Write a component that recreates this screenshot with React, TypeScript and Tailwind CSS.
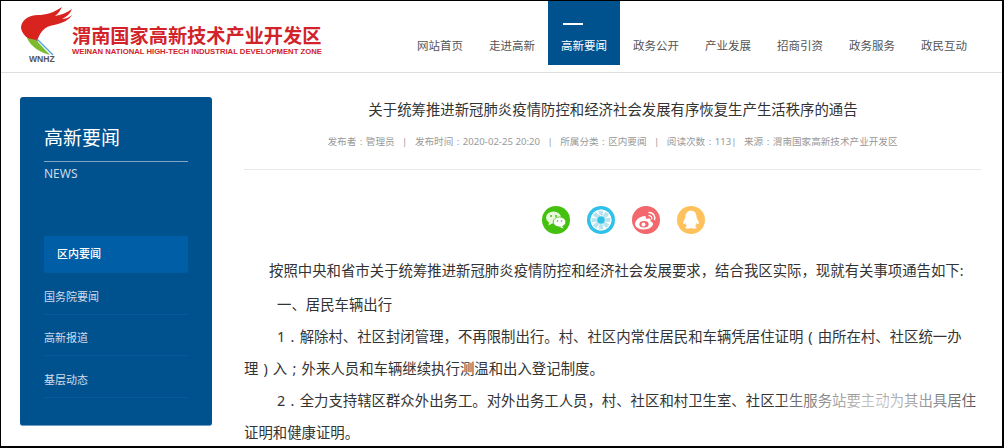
import React from "react";

const cjk = "font-['Noto_Sans','Noto_Sans_CJK_SC',sans-serif]";

const navItems = ["网站首页", "走进高新", "高新要闻", "政务公开", "产业发展", "招商引资", "政务服务", "政民互动"];
const sideItems = ["国务院要闻", "高新报道", "基层动态"];

// punctuation sits centred in a full-width cell in the reference
function Fw({ children }: { children: React.ReactNode }) {
  return <span className="inline-block w-[1em] text-center">{children}</span>;
}

function Logo() {
  return (
    <div className="flex items-start">
      <svg width="57" height="60" viewBox="0 0 57 60" className="mt-[4px] ml-[14px] shrink-0">
        <path d="M22 39C12 34 6 28 6 22C7 14 15 10 23 10C31 10 38 8 47 2C45 6 43 9 40 11C46 10 51 8 57 4C55 9 51 12 47 14C50 14 53 13 57 10C54 15 48 18 39 20C30 21 23 28 22 39Z" fill="#d8231f" />
        <path d="M12 33L21 35L35 50C26 48 16 42 12 33Z" fill="#7dbb2e" />
        <path d="M22 34L38 50" fill="none" stroke="#4aa5dc" strokeWidth="1.2" />
        <text x="14" y="57" fontSize="8.6" fontWeight="700" fill="#555" fontFamily="'Liberation Sans',sans-serif">WNHZ</text>
      </svg>
      <div className="mt-[25px] w-[252px] text-[#d2232a]">
        <div className="text-[19.2px] leading-[20px] font-bold whitespace-nowrap">渭南国家高新技术产业开发区</div>
        <div className="mt-[1px] font-['Liberation_Sans',sans-serif] text-[7.7px] leading-[9px] font-bold whitespace-nowrap">
          WEINAN NATIONAL HIGH-TECH INDUSTRIAL DEVELOPMENT ZONE
        </div>
      </div>
    </div>
  );
}

function Nav() {
  return (
    <div className="flex">
      {navItems.map((item) =>
        item === "高新要闻" ? (
          <div key={item} className="flex h-[64px] w-[72px] flex-col items-center bg-[#00528f] text-white">
            <div className="mt-[22px] mr-[22px] h-[2px] w-[20px] bg-white" />
            <div className="mt-[13px] text-[11.5px] leading-[16px]">{item}</div>
          </div>
        ) : (
          <div key={item} className="flex h-[64px] w-[72px] justify-center pt-[37px] text-[11.5px] leading-[16px] text-[#555]">
            {item}
          </div>
        ),
      )}
    </div>
  );
}

function Sidebar() {
  return (
    <aside className="mt-[24px] ml-[19px] h-[329px] w-[192px] shrink-0 rounded-[3px] border-b border-b-[#6f9dc4] bg-[#00528f] px-[24px] pt-[28px]">
      <div className="text-[19px] leading-[26px] text-white">高新要闻</div>
      <div className="mt-[10px] h-px bg-[#7fa8c7]" />
      <div className="mt-[3px] text-[12px] leading-[18px] text-[#c9d8e6]">NEWS</div>
      <div className="mt-[53px] flex h-[37px] items-center rounded-[2px] bg-[#005ea6] pl-[13px] text-[11px] font-medium text-white">区内要闻</div>
      {sideItems.map((item) => (
        <div key={item} className="flex h-[41.5px] items-center border-b border-b-[#07599a] pt-[7px] text-[11px] text-[#cfdcea]">
          {item}
        </div>
      ))}
    </aside>
  );
}

function ShareIcons() {
  return (
    <div className="mt-[36px] ml-[21px] flex justify-center gap-[17px]">
      <div className="flex h-[28px] w-[28px] items-center justify-center rounded-full bg-[#44c10e]">
        <svg width="22" height="20" viewBox="0 0 22 20">
          <ellipse cx="8.5" cy="7.5" rx="7.5" ry="6" fill="#e6f7dc" />
          <path d="M4 12L3.5 15.5L8 13Z" fill="#e6f7dc" />
          <ellipse cx="14.5" cy="12" rx="6.3" ry="5" fill="#fff" stroke="#44c10e" strokeWidth="0.8" />
          <path d="M17 16L18.5 18.5L14.5 17Z" fill="#fff" />
          <circle cx="6" cy="6" r="1" fill="#44c10e" />
          <circle cx="11" cy="6" r="1" fill="#44c10e" />
          <circle cx="12.5" cy="11" r="0.8" fill="#44c10e" />
          <circle cx="16.5" cy="11" r="0.8" fill="#44c10e" />
        </svg>
      </div>
      <div className="flex h-[28px] w-[28px] items-center justify-center rounded-full bg-[#2fc1ea]">
        <svg width="22" height="22" viewBox="0 0 22 22">
          <circle cx="11" cy="11" r="10.5" fill="#fff" />
          {[0, 45, 90, 135, 180, 225, 270, 315].map((deg) => (
            <path key={deg} d="M14 8.5L13 1L8 1.5L9 7Z" fill="#b6e3ec" stroke="#fff" strokeWidth="0.8" transform={`rotate(${deg} 11 11)`} />
          ))}
          <circle cx="11" cy="11" r="3.8" fill="#2fc1ea" />
        </svg>
      </div>
      <div className="flex h-[28px] w-[28px] items-center justify-center rounded-full bg-[#f2686d]">
        <svg width="24" height="22" viewBox="0 0 24 22">
          <path d="M10 7C5 8 1 11.5 1 15C1 18.5 5.5 20.5 10 20.5C15 20.5 19 17.5 19 15C19 13.5 17.6 13 16.5 12.6C17.2 11 16.5 9.6 15 9.6C13.5 9.6 12 10.2 12 10.2C12.4 8.4 11.8 6.6 10 7Z" fill="#fff" />
          <ellipse cx="10" cy="15.2" rx="4.6" ry="3.3" fill="#f2686d" />
          <circle cx="9.5" cy="15.4" r="2" fill="#fff" />
          <path d="M15 3.5C19 3.5 21.4 6.6 20.6 10.5" fill="none" stroke="#fff" strokeWidth="1.4" strokeLinecap="round" />
          <path d="M15 6.6C17 6.6 18.2 8.2 17.7 10" fill="none" stroke="#fff" strokeWidth="1.2" strokeLinecap="round" />
        </svg>
      </div>
      <div className="flex h-[28px] w-[28px] items-center justify-center rounded-full bg-[#ffc15c]">
        <svg width="20" height="22" viewBox="0 0 18 20">
          <path d="M9 1.5C5.5 1.5 4 4 4 7C4 8 3.5 9 2.8 10C1.8 11.6 1.6 13.4 2.3 13.8C2.8 14 3.4 13.3 3.8 12.6C4 14 4.6 15 5.4 15.6C4.4 16 3.6 16.6 4 17.3C4.5 18 7.5 18 9 17.2C10.5 18 13.5 18 14 17.3C14.4 16.6 13.6 16 12.6 15.6C13.4 15 14 14 14.2 12.6C14.6 13.3 15.2 14 15.7 13.8C16.4 13.4 16.2 11.6 15.2 10C14.5 9 14 8 14 7C14 4 12.5 1.5 9 1.5Z" fill="#fff" />
        </svg>
      </div>
    </div>
  );
}

function Article() {
  return (
    <main className="ml-[32px] w-[737px] shrink-0">
      <div className="border-b border-b-[#e8e8e8] pb-[20px]">
        <h1 className="mt-[27px] pl-[1px] text-center text-[14.4px] leading-[20px] font-normal text-[#333]">
          关于统筹推进新冠肺炎疫情防控和经济社会发展有序恢复生产生活秩序的通告
        </h1>
        <div className="mt-[15px] flex justify-center text-[9.6px] leading-[14px] whitespace-pre text-[#999]">
          <span>发布者<Fw>:</Fw>管理员   |   发布时间<Fw>:</Fw>2020-02-25 20:20   |   所属分类<Fw>:</Fw>区内要闻   |   阅读次数<Fw>:</Fw>113|   来源<Fw>:</Fw>渭南国家高新技术产业开发区</span>
        </div>
      </div>
      <ShareIcons />
      <div className="relative mt-[21px] text-[14.4px] leading-[32px] whitespace-nowrap text-[#333]">
        <p className="pl-[25px]">按照中央和省市关于统筹推进新冠肺炎疫情防控和经济社会发展要求，结合我区实际，现就有关事项通告如下:</p>
        <p className="mt-[2px] pl-[33px]">一、居民车辆出行</p>
        <p className="pl-[33px]">1<Fw>.</Fw>解除村、社区封闭管理，不再限制出行。村、社区内常住居民和车辆凭居住证明<Fw>(</Fw>由所在村、社区统一办</p>
        <p>理<Fw>)</Fw>入<Fw>;</Fw>外来人员和车辆继续执行测温和出入登记制度。</p>
        <p className="pl-[33px]">2<Fw>.</Fw>全力支持辖区群众外出务工。对外出务工人员，村、社区和村卫生室、社区卫生服务站要主动为其出具居住</p>
        <p>证明和健康证明。</p>
        <div className="absolute top-[128px] left-[540px] h-[40px] w-[190px] bg-[radial-gradient(ellipse_at_center,rgba(255,255,255,0.8),rgba(255,255,255,0))]" />
      </div>
    </main>
  );
}

export default function App() {
  return (
    <div className={`h-[448px] w-[1004px] overflow-hidden border-t border-r-2 border-b-2 border-l border-black bg-white ${cjk}`}>
      <header className="flex h-[72px] justify-between border-b border-b-[#dedede] pr-[22px]">
        <Logo />
        <Nav />
      </header>
      <div className="flex">
        <Sidebar />
        <Article />
      </div>
    </div>
  );
}
